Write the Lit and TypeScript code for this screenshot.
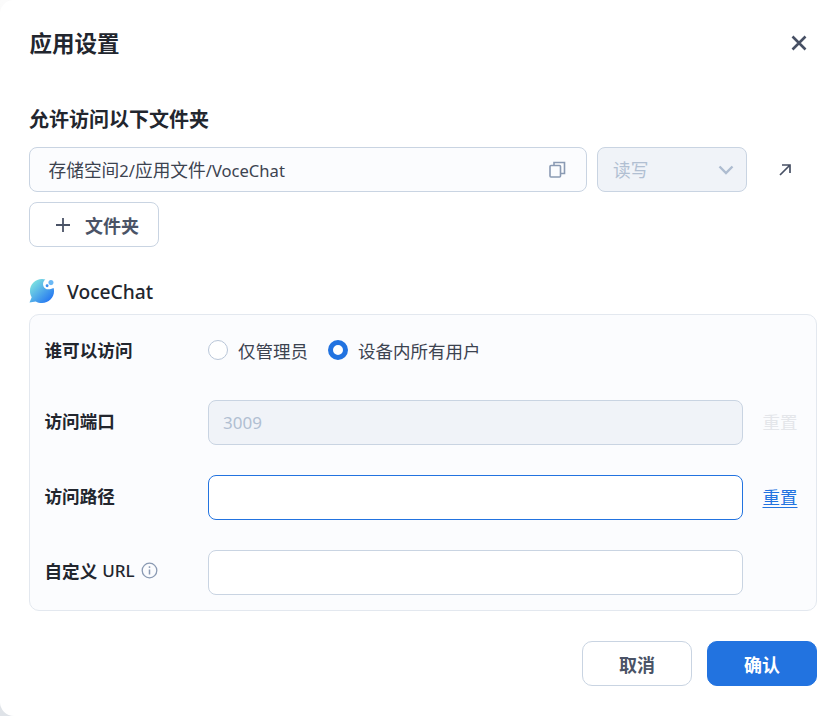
import { LitElement, html, css } from 'lit';
import { customElement } from 'lit/decorators.js';

@customElement('app-root')
export class AppRoot extends LitElement {
  static styles = css`
    :host {
      display: block;
      width: 838px;
      height: 716px;
      background: linear-gradient(#fbfbfb, #dfe3e8);
      font-family: 'Noto Sans', 'Noto Sans CJK SC', sans-serif;
      color: #22262e;
    }
    .dialog {
      box-sizing: border-box;
      width: 838px;
      height: 716px;
      background: #fff;
      border-radius: 14px 0 0 14px;
      padding: 0 21px 0 29px;
      display: flex;
      flex-direction: column;
    }
    .head {
      box-sizing: border-box;
      height: 88px;
      padding-bottom: 4px;
      display: flex;
      align-items: center;
      justify-content: space-between;
    }
    .title { font-size: 22.5px; font-weight: 700; margin-left: 0.5px; }
    .close { display: block; margin: 2px 10px 0 0; }
    .section-title {
      margin-top: 18px;
      font-size: 20px;
      font-weight: 700;
      line-height: 28px;
    }
    .path-row {
      margin-top: 13px;
      display: flex;
      align-items: center;
      gap: 10px;
    }
    .field {
      box-sizing: border-box;
      height: 45px;
      border: 1px solid #c9d4e2;
      border-radius: 8px;
      display: flex;
      align-items: center;
      font-size: 17.7px;
    }
    .field > span { padding-bottom: 2px; }
    .latin { font-size: 16.6px; }
    .path {
      width: 558px;
      padding: 0 20px 0 18.5px;
      background: #fbfcfe;
      justify-content: space-between;
      color: #3c4350;
    }
    .perm {
      width: 150px;
      padding: 0 12px 0 15px;
      background: #f0f3f8;
      color: #b1bfd2;
      justify-content: space-between;
    }
    .open { margin-left: 22px; display: block; }
    .add {
      box-sizing: border-box;
      margin-top: 10px;
      width: 130px;
      height: 45px;
      border: 1px solid #c9d4e2;
      border-radius: 8px;
      background: #fff;
      display: flex;
      align-items: center;
      gap: 14px;
      padding-left: 25px;
      font-size: 18px;
      font-weight: 700;
      color: #4a5366;
    }
    .app {
      margin-top: 28px;
      display: flex;
      align-items: center;
      gap: 12px;
      height: 32px;
      font-size: 19.2px;
      font-weight: 500;
    }
    .panel {
      box-sizing: border-box;
      margin-top: 7px;
      height: 297px;
      border: 1px solid #e3e8ef;
      border-radius: 10px;
      background: #fbfcfe;
      padding: 0 18.5px 0 14.5px;
      display: flex;
      flex-direction: column;
    }
    .row {
      display: grid;
      grid-template-columns: 163.5px 535px 1fr;
      align-items: center;
      height: 45px;
    }
    .row + .row { margin-top: 30px; }
    .row.radio-row { height: 30px; margin-top: 20px; margin-bottom: 5px; }
    .label {
      font-size: 17.6px;
      font-weight: 700;
      display: flex;
      align-items: center;
      padding-bottom: 4px;
    }
    .radio-row .label { padding-bottom: 2px; }
    .label .latin { font-size: 17px; font-weight: 500; margin-left: 5px; }
    .label svg { margin-left: 6px; }
    .radios { display: flex; align-items: center; font-size: 17.5px; color: #3c4350; }
    .radio {
      box-sizing: border-box;
      width: 20px;
      height: 20px;
      border-radius: 50%;
      border: 1px solid #b9c6d8;
      background: #fff;
      margin-right: 10px;
    }
    .radio.on { border: 5px solid #2273e0; }
    .opt { margin-right: 20px; }
    .input {
      box-sizing: border-box;
      height: 45px;
      border: 1px solid #c9d4e2;
      border-radius: 8px;
      background: #fff;
      display: flex;
      align-items: center;
      padding: 0 14px;
      font-size: 17px;
    }
    .input.disabled { background: #f0f3f8; color: #b1bfd2; }
    .input.focus { border-color: #2273e0; }
    .reset {
      justify-self: end;
      font-size: 17.5px;
      color: #2273e0;
      text-decoration: underline;
      text-underline-offset: 3px;
      padding-bottom: 2px;
    }
    .reset.off { color: #e4e6ea; text-decoration: none; }
    .foot {
      margin-top: 30px;
      display: flex;
      justify-content: flex-end;
      gap: 15px;
    }
    .btn {
      box-sizing: border-box;
      width: 110px;
      height: 45px;
      border-radius: 10px;
      display: flex;
      align-items: center;
      justify-content: center;
      font-size: 18px;
      font-weight: 700;
      border: 1px solid #c9d4e2;
      background: #fff;
      color: #4a5366;
    }
    .btn.primary { background: #2273e0; border-color: #2273e0; color: #fff; }
  `;

  render() {
    return html`
      <div class="dialog">
        <div class="head">
          <div class="title">应用设置</div>
          <svg class="close" width="16" height="16" viewBox="0 0 16 16" fill="none" stroke="#475064" stroke-width="2.600">
            <path d="M1.500 1.500l13 13M14.500 1.500l-13 13" />
          </svg>
        </div>
        <div class="section-title">允许访问以下文件夹</div>
        <div class="path-row">
          <div class="field path">
            <span>存储空间<span class="latin">2/</span>应用文件<span class="latin">/VoceChat</span></span>
            <svg width="17" height="17" viewBox="0 0 17 17" fill="none" stroke="#8a9ab3" stroke-width="1.600">
              <rect x="1" y="4.500" width="10.500" height="11.500" rx="1" />
              <path d="M5 4.500V1.500h10.500v11h-4" />
            </svg>
          </div>
          <div class="field perm">
            <span>读写</span>
            <svg width="16" height="10" viewBox="0 0 16 10" fill="none" stroke="#aebcd0" stroke-width="2.400">
              <path d="M1.500 1.500L8 8l6.500-6.500" />
            </svg>
          </div>
          <svg class="open" width="12" height="12" viewBox="0 0 12 12" fill="none" stroke="#475064" stroke-width="1.700">
            <path d="M1 11L11 1M3 1h8v8" />
          </svg>
        </div>
        <div class="add">
          <svg width="16" height="16" viewBox="0 0 16 16" fill="none" stroke="#4a5366" stroke-width="1.800">
            <path d="M8 1v14M1 8h14" />
          </svg>
          <span>文件夹</span>
        </div>
        <div class="app">
          <svg width="26" height="26" viewBox="0 0 27 27">
            <defs>
              <linearGradient id="vc" x1="0.100" y1="0.100" x2="0.900" y2="0.900">
                <stop offset="0" stop-color="#80e6e0" />
                <stop offset="1" stop-color="#2273f2" />
              </linearGradient>
            </defs>
            <path
              fill="url(#vc)"
              d="M13.500 1C14.800 1 16 1.200 17 1.600C14.800 3 14 6 15 8.500C16.300 11.500 20 13 25.500 10.500C25.800 11.300 26 12.300 26 13.500C26 20.400 20.400 26 13.500 26C11 26 9 25.400 7 24.400L0.500 25.500L2.800 20C1.600 18 1 15.800 1 13.500C1 6.600 6.600 1 13.500 1Z"
            />
            <circle cx="22.800" cy="4.800" r="2.600" fill="#6ab8f5" />
            <circle cx="18.800" cy="8" r="1.500" fill="#3a8df0" />
          </svg>
          <span>VoceChat</span>
        </div>
        <div class="panel">
          <div class="row radio-row">
            <div class="label">谁可以访问</div>
            <div class="radios">
              <div class="radio"></div>
              <span class="opt">仅管理员</span>
              <div class="radio on"></div>
              <span>设备内所有用户</span>
            </div>
          </div>
          <div class="row">
            <div class="label">访问端口</div>
            <div class="input disabled">3009</div>
            <div class="reset off">重置</div>
          </div>
          <div class="row">
            <div class="label">访问路径</div>
            <div class="input focus"></div>
            <div class="reset">重置</div>
          </div>
          <div class="row">
            <div class="label">
              自定义<span class="latin">URL</span>
              <svg width="17" height="17" viewBox="0 0 17 17" fill="none" stroke="#8a9ab3" stroke-width="1.300">
                <circle cx="8.500" cy="8.500" r="7.300" />
                <path d="M8.500 7.500v5" stroke-width="1.500" />
                <path d="M8.500 4.300v1.600" stroke-width="1.500" />
              </svg>
            </div>
            <div class="input"></div>
          </div>
        </div>
        <div class="foot">
          <div class="btn">取消</div>
          <div class="btn primary">确认</div>
        </div>
      </div>
    `;
  }
}
